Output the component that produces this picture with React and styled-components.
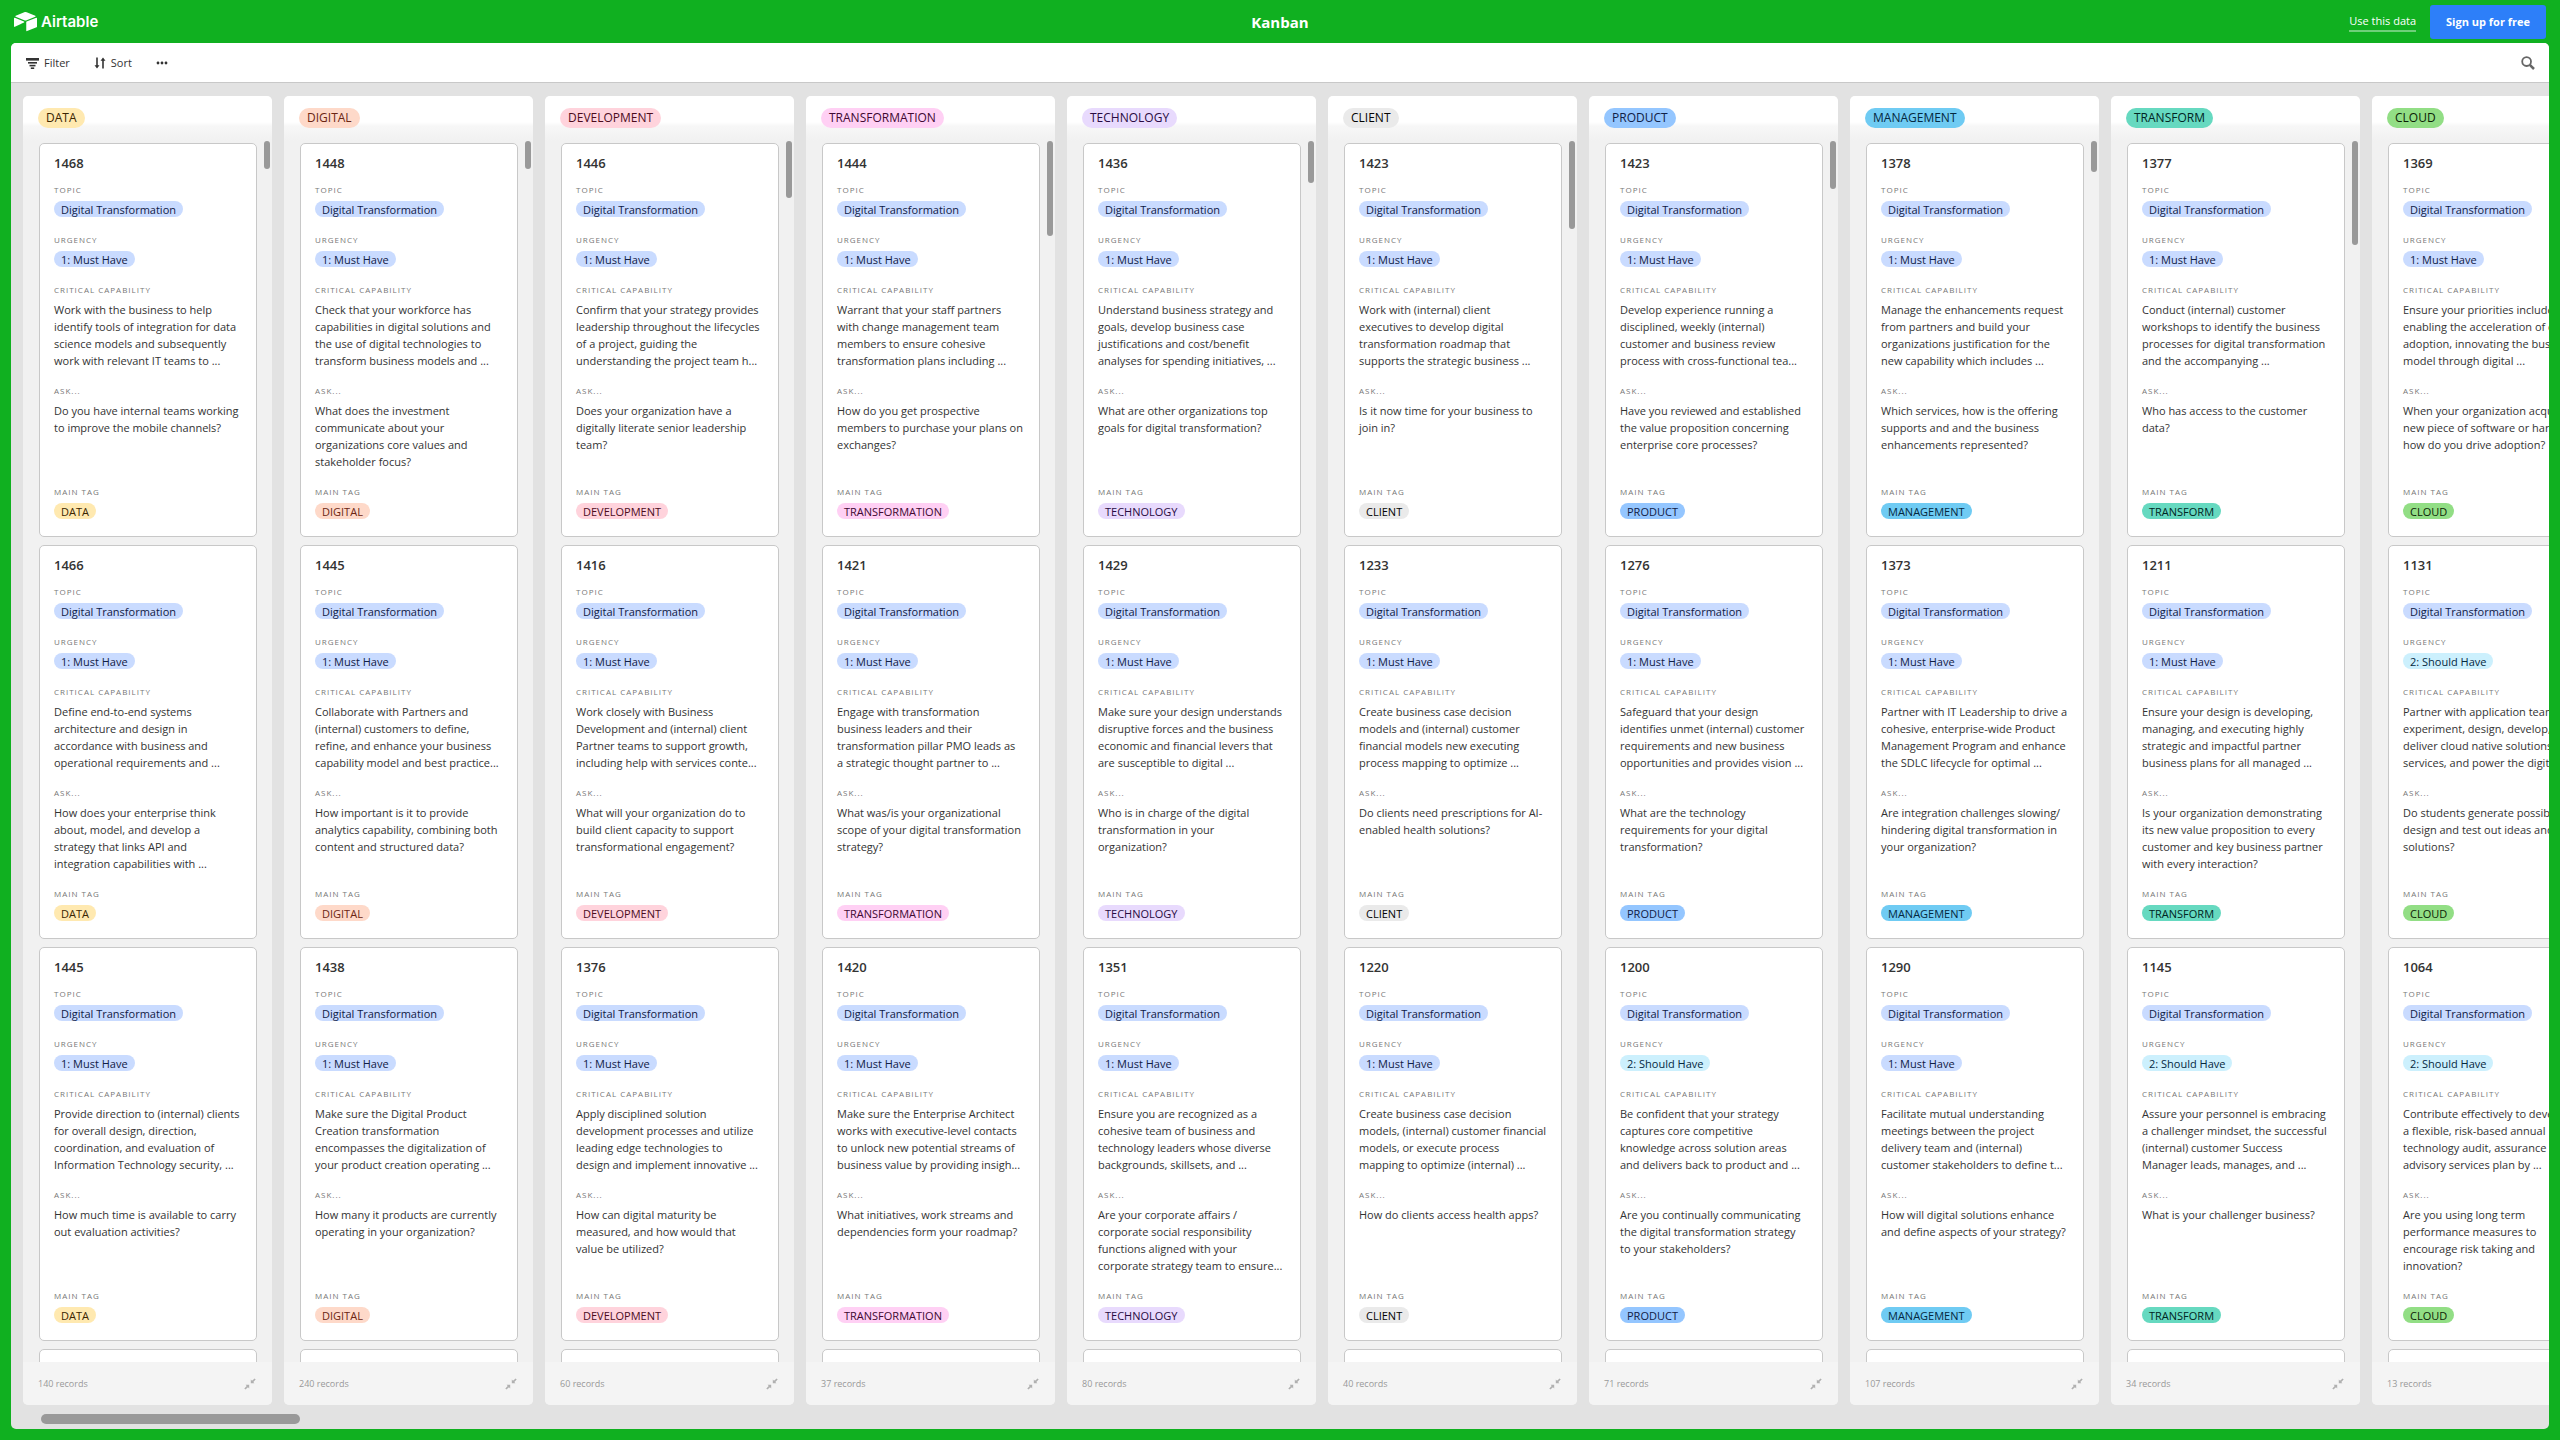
import styled, { createGlobalStyle } from "styled-components";
import { SiAirtable } from "react-icons/si";

const TAGS = {
  DATA: { bg: "#ffe9b0", color: "#3b2501" },
  DIGITAL: { bg: "#fed9c9", color: "#6b2613" },
  DEVELOPMENT: { bg: "#ffd3dc", color: "#4c0c1c" },
  TRANSFORMATION: { bg: "#ffd0f4", color: "#400832" },
  TECHNOLOGY: { bg: "#e8dafd", color: "#280b42" },
  CLIENT: { bg: "#eaeaea", color: "#040404" },
  PRODUCT: { bg: "#94c6ff", color: "#102046" },
  MANAGEMENT: { bg: "#6fcbf3", color: "#04283f" },
  TRANSFORM: { bg: "#66d9c0", color: "#012524" },
  CLOUD: { bg: "#92de85", color: "#0b1d05" },
  "Digital Transformation": { bg: "#c9dbff", color: "#102046" },
  "1: Must Have": { bg: "#c9dbff", color: "#102046" },
  "2: Should Have": { bg: "#ccf0fd", color: "#04283f" },
};

const MUST = "1: Must Have";
const SHOULD = "2: Should Have";

const COLUMNS = [
  {
    tag: "DATA",
    records: 140,
    cards: [
      {
        id: 1468,
        urgency: MUST,
        capability:
          "Work with the business to help\nidentify tools of integration for data\nscience models and subsequently\nwork with relevant IT teams to ...",
        ask: "Do you have internal teams working\nto improve the mobile channels?",
      },
      {
        id: 1466,
        urgency: MUST,
        capability:
          "Define end-to-end systems\narchitecture and design in\naccordance with business and\noperational requirements and ...",
        ask: "How does your enterprise think\nabout, model, and develop a\nstrategy that links API and\nintegration capabilities with ...",
      },
      {
        id: 1445,
        urgency: MUST,
        capability:
          "Provide direction to (internal) clients\nfor overall design, direction,\ncoordination, and evaluation of\nInformation Technology security, ...",
        ask: "How much time is available to carry\nout evaluation activities?",
      },
    ],
  },
  {
    tag: "DIGITAL",
    records: 240,
    cards: [
      {
        id: 1448,
        urgency: MUST,
        capability:
          "Check that your workforce has\ncapabilities in digital solutions and\nthe use of digital technologies to\ntransform business models and ...",
        ask: "What does the investment\ncommunicate about your\norganizations core values and\nstakeholder focus?",
      },
      {
        id: 1445,
        urgency: MUST,
        capability:
          "Collaborate with Partners and\n(internal) customers to define,\nrefine, and enhance your business\ncapability model and best practice...",
        ask: "How important is it to provide\nanalytics capability, combining both\ncontent and structured data?",
      },
      {
        id: 1438,
        urgency: MUST,
        capability:
          "Make sure the Digital Product\nCreation transformation\nencompasses the digitalization of\nyour product creation operating ...",
        ask: "How many it products are currently\noperating in your organization?",
      },
    ],
  },
  {
    tag: "DEVELOPMENT",
    records: 60,
    cards: [
      {
        id: 1446,
        urgency: MUST,
        capability:
          "Confirm that your strategy provides\nleadership throughout the lifecycles\nof a project, guiding the\nunderstanding the project team h...",
        ask: "Does your organization have a\ndigitally literate senior leadership\nteam?",
      },
      {
        id: 1416,
        urgency: MUST,
        capability:
          "Work closely with Business\nDevelopment and (internal) client\nPartner teams to support growth,\nincluding help with services conte...",
        ask: "What will your organization do to\nbuild client capacity to support\ntransformational engagement?",
      },
      {
        id: 1376,
        urgency: MUST,
        capability:
          "Apply disciplined solution\ndevelopment processes and utilize\nleading edge technologies to\ndesign and implement innovative ...",
        ask: "How can digital maturity be\nmeasured, and how would that\nvalue be utilized?",
      },
    ],
  },
  {
    tag: "TRANSFORMATION",
    records: 37,
    cards: [
      {
        id: 1444,
        urgency: MUST,
        capability:
          "Warrant that your staff partners\nwith change management team\nmembers to ensure cohesive\ntransformation plans including ...",
        ask: "How do you get prospective\nmembers to purchase your plans on\nexchanges?",
      },
      {
        id: 1421,
        urgency: MUST,
        capability:
          "Engage with transformation\nbusiness leaders and their\ntransformation pillar PMO leads as\na strategic thought partner to ...",
        ask: "What was/is your organizational\nscope of your digital transformation\nstrategy?",
      },
      {
        id: 1420,
        urgency: MUST,
        capability:
          "Make sure the Enterprise Architect\nworks with executive-level contacts\nto unlock new potential streams of\nbusiness value by providing insigh...",
        ask: "What initiatives, work streams and\ndependencies form your roadmap?",
      },
    ],
  },
  {
    tag: "TECHNOLOGY",
    records: 80,
    cards: [
      {
        id: 1436,
        urgency: MUST,
        capability:
          "Understand business strategy and\ngoals, develop business case\njustifications and cost/benefit\nanalyses for spending initiatives, ...",
        ask: "What are other organizations top\ngoals for digital transformation?",
      },
      {
        id: 1429,
        urgency: MUST,
        capability:
          "Make sure your design understands\ndisruptive forces and the business\neconomic and financial levers that\nare susceptible to digital ...",
        ask: "Who is in charge of the digital\ntransformation in your\norganization?",
      },
      {
        id: 1351,
        urgency: MUST,
        capability:
          "Ensure you are recognized as a\ncohesive team of business and\ntechnology leaders whose diverse\nbackgrounds, skillsets, and ...",
        ask: "Are your corporate affairs /\ncorporate social responsibility\nfunctions aligned with your\ncorporate strategy team to ensure...",
      },
    ],
  },
  {
    tag: "CLIENT",
    records: 40,
    cards: [
      {
        id: 1423,
        urgency: MUST,
        capability:
          "Work with (internal) client\nexecutives to develop digital\ntransformation roadmap that\nsupports the strategic business ...",
        ask: "Is it now time for your business to\njoin in?",
      },
      {
        id: 1233,
        urgency: MUST,
        capability:
          "Create business case decision\nmodels and (internal) customer\nfinancial models new executing\nprocess mapping to optimize ...",
        ask: "Do clients need prescriptions for AI-\nenabled health solutions?",
      },
      {
        id: 1220,
        urgency: MUST,
        capability:
          "Create business case decision\nmodels, (internal) customer financial\nmodels, or execute process\nmapping to optimize (internal) ...",
        ask: "How do clients access health apps?",
      },
    ],
  },
  {
    tag: "PRODUCT",
    records: 71,
    cards: [
      {
        id: 1423,
        urgency: MUST,
        capability:
          "Develop experience running a\ndisciplined, weekly (internal)\ncustomer and business review\nprocess with cross-functional tea...",
        ask: "Have you reviewed and established\nthe value proposition concerning\nenterprise core processes?",
      },
      {
        id: 1276,
        urgency: MUST,
        capability:
          "Safeguard that your design\nidentifies unmet (internal) customer\nrequirements and new business\nopportunities and provides vision ...",
        ask: "What are the technology\nrequirements for your digital\ntransformation?",
      },
      {
        id: 1200,
        urgency: SHOULD,
        capability:
          "Be confident that your strategy\ncaptures core competitive\nknowledge across solution areas\nand delivers back to product and ...",
        ask: "Are you continually communicating\nthe digital transformation strategy\nto your stakeholders?",
      },
    ],
  },
  {
    tag: "MANAGEMENT",
    records: 107,
    cards: [
      {
        id: 1378,
        urgency: MUST,
        capability:
          "Manage the enhancements request\nfrom partners and build your\norganizations justification for the\nnew capability which includes ...",
        ask: "Which services, how is the offering\nsupports and and the business\nenhancements represented?",
      },
      {
        id: 1373,
        urgency: MUST,
        capability:
          "Partner with IT Leadership to drive a\ncohesive, enterprise-wide Product\nManagement Program and enhance\nthe SDLC lifecycle for optimal ...",
        ask: "Are integration challenges slowing/\nhindering digital transformation in\nyour organization?",
      },
      {
        id: 1290,
        urgency: MUST,
        capability:
          "Facilitate mutual understanding\nmeetings between the project\ndelivery team and (internal)\ncustomer stakeholders to define t...",
        ask: "How will digital solutions enhance\nand define aspects of your strategy?",
      },
    ],
  },
  {
    tag: "TRANSFORM",
    records: 34,
    cards: [
      {
        id: 1377,
        urgency: MUST,
        capability:
          "Conduct (internal) customer\nworkshops to identify the business\nprocesses for digital transformation\nand the accompanying ...",
        ask: "Who has access to the customer\ndata?",
      },
      {
        id: 1211,
        urgency: MUST,
        capability:
          "Ensure your design is developing,\nmanaging, and executing highly\nstrategic and impactful partner\nbusiness plans for all managed ...",
        ask: "Is your organization demonstrating\nits new value proposition to every\ncustomer and key business partner\nwith every interaction?",
      },
      {
        id: 1145,
        urgency: SHOULD,
        capability:
          "Assure your personnel is embracing\na challenger mindset, the successful\n(internal) customer Success\nManager leads, manages, and ...",
        ask: "What is your challenger business?",
      },
    ],
  },
  {
    tag: "CLOUD",
    records: 13,
    cards: [
      {
        id: 1369,
        urgency: MUST,
        capability:
          "Ensure your priorities include\nenabling the acceleration of cloud\nadoption, innovating the business\nmodel through digital ...",
        ask: "When your organization acquires a\nnew piece of software or hardware,\nhow do you drive adoption?",
      },
      {
        id: 1131,
        urgency: SHOULD,
        capability:
          "Partner with application teams to\nexperiment, design, develop, and\ndeliver cloud native solutions and\nservices, and power the digital ...",
        ask: "Do students generate possible\ndesign and test out ideas and\nsolutions?",
      },
      {
        id: 1064,
        urgency: SHOULD,
        capability:
          "Contribute effectively to develop\na flexible, risk-based annual\ntechnology audit, assurance and\nadvisory services plan by ...",
        ask: "Are you using long term\nperformance measures to\nencourage risk taking and\ninnovation?",
      },
    ],
  },
];

// share of the list that is on screen, in percent
const thumbSize = (records) => (300 / records - 0.3).toFixed(2);

const FilterIcon = () => (
  <svg width="14" height="14" viewBox="0 0 14 14" fill="currentColor" aria-hidden="true">
    <rect x="1" y="2" width="13" height="2.6" />
    <rect x="3" y="6" width="9" height="1.6" />
    <rect x="4.5" y="8.8" width="6" height="1.6" />
    <rect x="5.8" y="11.4" width="3.4" height="1.6" />
  </svg>
);

const SortIcon = () => (
  <svg width="12" height="12" viewBox="0 0 12 12" fill="currentColor" aria-hidden="true">
    <path d="M2.2 .6h1.6v7.6h1.7L3 11.4.5 8.2h1.7z" />
    <path d="M8.2 11.4h1.6V3.8h1.7L9 .6 6.5 3.8h1.7z" />
  </svg>
);

const MoreIcon = () => (
  <svg width="12" height="4" viewBox="0 0 12 4" fill="currentColor" aria-hidden="true">
    <circle cx="2" cy="2" r="1.4" />
    <circle cx="6" cy="2" r="1.4" />
    <circle cx="10" cy="2" r="1.4" />
  </svg>
);

const SearchIcon = () => (
  <svg width="14" height="14" viewBox="0 0 14 14" fill="none" stroke="currentColor" aria-hidden="true">
    <circle cx="5.6" cy="5.6" r="4.4" strokeWidth="1.8" />
    <path d="M8.8 8.8l4.2 4.2" strokeWidth="2.5" />
  </svg>
);

const CollapseIcon = () => (
  <svg width="12" height="12" viewBox="0 0 12 12" fill="currentColor" aria-hidden="true">
    <path d="M6.8 1.6v3.6h3.6L9.3 4.1l2.4-2.6-1.1-1.1L8 2.8z" />
    <path d="M5.2 10.4V6.8H1.6l1.1 1.1L.3 10.5l1.1 1.1L4 9.2z" />
  </svg>
);

const Tag = ({ name }) => <Pill $tone={TAGS[name]}>{name}</Pill>;

const Card = ({ card, tag }) => (
  <CardWrapper>
    <CardTitle>{card.id}</CardTitle>
    <Field>
      <FieldLabel>Topic</FieldLabel>
      <TagValue>
        <Tag name="Digital Transformation" />
      </TagValue>
    </Field>
    <Field>
      <FieldLabel>Urgency</FieldLabel>
      <TagValue>
        <Tag name={card.urgency} />
      </TagValue>
    </Field>
    <Field>
      <FieldLabel>Critical Capability</FieldLabel>
      <TextValue>{card.capability}</TextValue>
    </Field>
    <Field>
      <FieldLabel>Ask...</FieldLabel>
      <TextValue>{card.ask}</TextValue>
    </Field>
    <Field>
      <FieldLabel>Main Tag</FieldLabel>
      <TagValue>
        <Tag name={tag} />
      </TagValue>
    </Field>
  </CardWrapper>
);

const Column = ({ column }) => (
  <ColumnWrapper>
    <ColumnHeader>
      <HeaderPill $tone={TAGS[column.tag]}>{column.tag}</HeaderPill>
    </ColumnHeader>
    <ListArea>
      <List>
        {column.cards.map((card) => (
          <Card key={card.id} card={card} tag={column.tag} />
        ))}
        <NextCard />
      </List>
      <ListThumb $size={thumbSize(column.records)} />
    </ListArea>
    <ColumnFooter>
      <span>{column.records} records</span>
      <IconButton aria-label="Collapse stack">
        <CollapseIcon />
      </IconButton>
    </ColumnFooter>
  </ColumnWrapper>
);

const App = () => {
  return (
    <Page>
      <GlobalStyle />
      <TopBar>
        <Logo href="#">
          <SiAirtable size={23} aria-hidden="true" />
          Airtable
        </Logo>
        <PageTitle>Kanban</PageTitle>
        <TopActions>
          <DataLink href="#">Use this data</DataLink>
          <SignUp>Sign up for free</SignUp>
        </TopActions>
      </TopBar>
      <Panel>
        <Toolbar>
          <ToolButton>
            <FilterIcon />
            Filter
          </ToolButton>
          <ToolButton>
            <SortIcon />
            Sort
          </ToolButton>
          <ToolButton aria-label="More options">
            <MoreIcon />
          </ToolButton>
          <SearchButton aria-label="Search">
            <SearchIcon />
          </SearchButton>
        </Toolbar>
        <Board>
          {COLUMNS.map((column) => (
            <Column key={column.tag} column={column} />
          ))}
          <BoardThumb />
        </Board>
      </Panel>
    </Page>
  );
};

const GlobalStyle = createGlobalStyle`
  * {
    box-sizing: border-box;
  }

  body {
    margin: 0;
    color: #333333;
    font-family: "Open Sans", "Noto Sans", sans-serif;
    font-size: 11px;
  }

  button {
    border: 0;
    padding: 0;
    background: none;
    color: inherit;
    font: inherit;
    cursor: pointer;
  }
`;

const Page = styled.div`
  display: flex;
  flex-direction: column;
  height: 100vh;
  padding: 0 11px 11px;
  background: #10b020;
`;

const TopBar = styled.header`
  display: grid;
  grid-template-columns: 1fr auto 1fr;
  align-items: center;
  height: 43px;
  padding: 0 3px;
  flex-shrink: 0;
  color: #ffffff;
`;

const Logo = styled.a`
  display: flex;
  align-items: center;
  gap: 4px;
  color: inherit;
  font-family: Inter, sans-serif;
  font-size: 15px;
  font-weight: 600;
  text-decoration: none;
`;

const PageTitle = styled.h1`
  margin: 0;
  font-size: 15px;
  font-weight: 700;
`;

const TopActions = styled.div`
  display: flex;
  align-items: center;
  justify-content: flex-end;
  gap: 14px;
`;

const DataLink = styled.a`
  border-bottom: 2px solid rgba(255, 255, 255, 0.4);
  color: inherit;
  font-size: 11px;
  font-weight: 500;
  line-height: 18px;
  text-decoration: none;
`;

const SignUp = styled.button`
  height: 34px;
  padding: 0 16px;
  border-radius: 3px;
  background-color: #2d7ff9;
  font-size: 11px;
  font-weight: 700;
`;

const Panel = styled.main`
  display: flex;
  flex-direction: column;
  flex: 1;
  min-height: 0;
  border-radius: 5px;
  background: #e2e2e2;
  overflow: hidden;
`;

const Toolbar = styled.div`
  display: flex;
  align-items: center;
  gap: 24px;
  height: 40px;
  padding: 0 14px;
  flex-shrink: 0;
  border-bottom: 1px solid #c8c8c8;
  background: #ffffff;
`;

const ToolButton = styled.button`
  display: flex;
  align-items: center;
  gap: 5px;
  font-size: 11px;
  font-weight: 500;
`;

const SearchButton = styled(ToolButton)`
  margin-left: auto;
  color: #666666;
`;

const Board = styled.div`
  position: relative;
  display: flex;
  gap: 12px;
  flex: 1;
  min-height: 0;
  padding: 13px 12px 24px;
`;

const BoardThumb = styled.div`
  position: absolute;
  left: 30px;
  bottom: 5px;
  width: 259px;
  height: 10px;
  border-radius: 5px;
  background: #999999;
`;

const ColumnWrapper = styled.section`
  display: flex;
  flex-direction: column;
  flex: 0 0 249px;
  border-radius: 5px;
  background: #f1f1f1;
  overflow: hidden;
`;

const ColumnHeader = styled.header`
  height: 45px;
  padding: 12px 15px 0;
  flex-shrink: 0;
  background: linear-gradient(#ffffff 26px, #f7f7f7 30px, #f1f1f1);
`;

const Pill = styled.span`
  display: inline-block;
  height: 16px;
  padding: 0 7px;
  border-radius: 8px;
  background: ${({ $tone }) => $tone.bg};
  color: ${({ $tone }) => $tone.color};
  line-height: 17px;
  white-space: nowrap;
`;

const HeaderPill = styled.h2`
  display: inline-block;
  height: 20px;
  margin: 0;
  padding: 0 8px;
  border-radius: 10px;
  background: ${({ $tone }) => $tone.bg};
  color: ${({ $tone }) => $tone.color};
  font-size: 12px;
  font-weight: 500;
  line-height: 19px;
`;

const ListArea = styled.div`
  position: relative;
  flex: 1;
  min-height: 0;
`;

const List = styled.div`
  display: flex;
  flex-direction: column;
  gap: 8px;
  height: 100%;
  padding: 2px 15px 0 16px;
  overflow: hidden;
`;

const ListThumb = styled.div`
  position: absolute;
  top: 0;
  right: 2px;
  width: 6px;
  height: ${({ $size }) => $size}%;
  min-height: 28px;
  border-radius: 3px;
  background: #999999;
`;

const CardWrapper = styled.article`
  flex-shrink: 0;
  padding: 10px 14px 14px;
  border: 1px solid #c8c8c8;
  border-radius: 5px;
  background: #ffffff;
`;

const NextCard = styled(CardWrapper)`
  height: 80px;
`;

const CardTitle = styled.h3`
  margin: 0 0 12px;
  font-size: 13px;
  font-weight: 600;
  line-height: 18px;
`;

const Field = styled.div`
  & + & {
    margin-top: 14px;
  }
`;

const FieldLabel = styled.div`
  margin-bottom: 5px;
  color: #777777;
  font-size: 8px;
  line-height: 12px;
  letter-spacing: 1px;
  text-transform: uppercase;
`;

const TagValue = styled.div`
  display: flex;
  height: 19px;
`;

const TextValue = styled.p`
  height: 70px;
  margin: 0;
  line-height: 17px;
  white-space: pre;
`;

const ColumnFooter = styled.footer`
  display: flex;
  align-items: center;
  justify-content: space-between;
  height: 43px;
  padding: 0 16px 0 15px;
  flex-shrink: 0;
  background: #f4f4f4;
  color: #999999;
  font-size: 9px;
`;

const IconButton = styled.button`
  display: flex;
  color: #b0b0b0;
`;

export default App;
